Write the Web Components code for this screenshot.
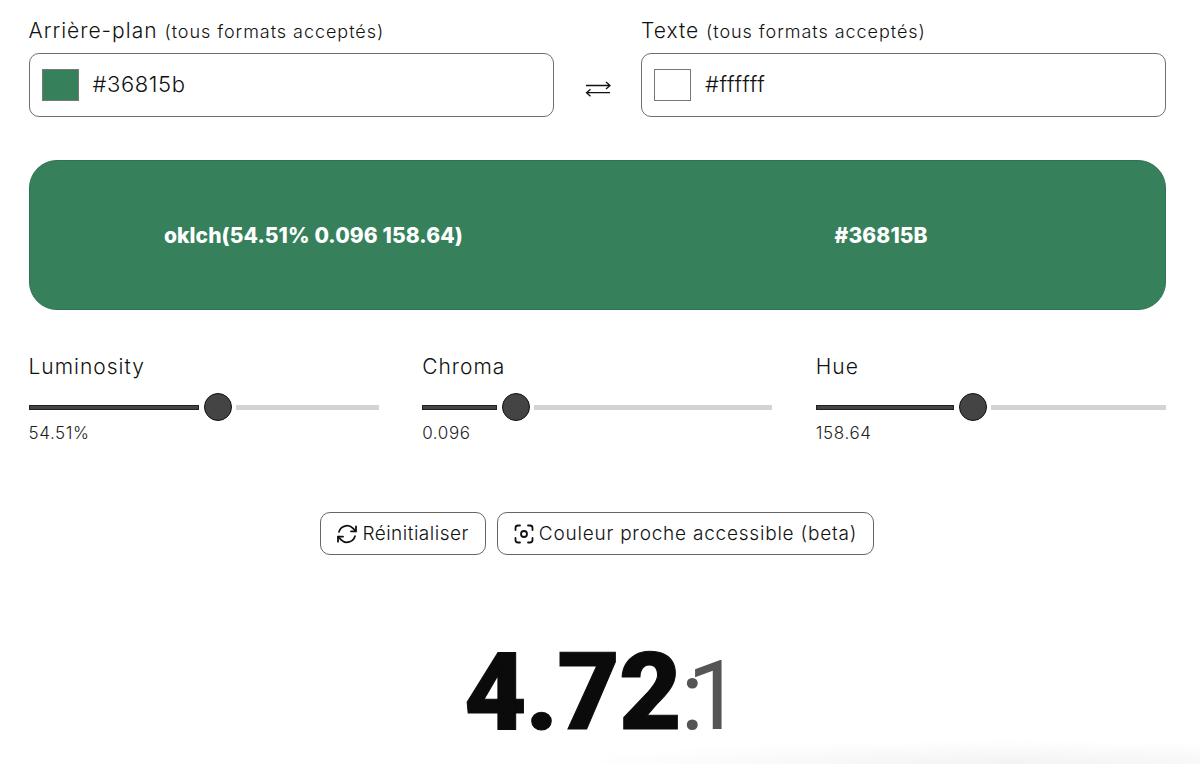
<!DOCTYPE html>
<html lang="fr">
<head>
<meta charset="utf-8">
<title>Contraste</title>
<style>
  html, body { margin: 0; background: #fff; }
  body {
    width: 1200px; height: 764px; overflow: hidden; position: relative;
    font-family: Inter, "Liberation Sans", sans-serif; font-weight: 300; color: #111;
  }
  main { display: block; padding: 17px 34px 0 28.5px; }
  .colors { display: grid; grid-template-columns: 525.5px 87px 525px; align-items: end; }
  .swap { display: flex; justify-content: center; padding-bottom: 17px; }
  .sliders { display: grid; grid-template-columns: repeat(3, 1fr); column-gap: 43.5px; margin-top: 43px; }
  .actions { display: flex; justify-content: center; gap: 11px; margin: 67px 0 0; }
  .glow {
    position: absolute; right: 0; bottom: 0; width: 640px; height: 24px;
    background: radial-gradient(ellipse at 70% 100%, #f3f3f3, #fff 70%);
  }
</style>
</head>
<body>
<main>
  <div class="colors">
    <color-field label="Arrière-plan" value="#36815b" color="#36815b"></color-field>
    <div class="swap"><swap-icon></swap-icon></div>
    <color-field label="Texte" value="#ffffff" color="#ffffff"></color-field>
  </div>
  <preview-band>
    <span>oklch(54.51% 0.096 158.64)</span>
    <span>#36815B</span>
  </preview-band>
  <div class="sliders">
    <range-row label="Luminosity" value="54.51%" fill="170"></range-row>
    <range-row label="Chroma" value="0.096" fill="75"></range-row>
    <range-row label="Hue" value="158.64" fill="138"></range-row>
  </div>
  <div class="actions">
    <action-button style="letter-spacing: 0.5px">
      <svg slot="icon" viewBox="0 0 24 24" width="24" height="24" fill="none" stroke="#111" stroke-width="1.8" stroke-linecap="round" stroke-linejoin="round">
        <path d="M16 9.35h5V4.36"/><path d="M3 19.64v-5h5"/>
        <path d="M4 9.87a8.25 8.25 0 0 1 13.8-3.7L21 9.35"/>
        <path d="M3 14.64l3.2 3.2A8.25 8.25 0 0 0 20 14.14"/>
      </svg>
      Réinitialiser
    </action-button>
    <action-button style="letter-spacing: 0.78px">
      <svg slot="icon" viewBox="0 0 24 24" width="24" height="24" fill="none" stroke="#111" stroke-width="1.8" stroke-linecap="round" stroke-linejoin="round">
        <path d="M3.5 8V6A2.5 2.5 0 0 1 6 3.5h2"/><path d="M16 3.5h2A2.5 2.5 0 0 1 20.5 6v2"/>
        <path d="M20.5 16v2a2.5 2.5 0 0 1-2.5 2.5h-2"/><path d="M8 20.5H6A2.5 2.5 0 0 1 3.5 18v-2"/>
        <circle cx="12" cy="12" r="3"/>
      </svg>
      Couleur proche accessible (beta)
    </action-button>
  </div>
  <ratio-score score="4.72" rest=":1"></ratio-score>
</main>
<div class="glow"></div>

<script>
class ColorField extends HTMLElement {
    constructor() {
        super();
        this.attachShadow({ mode: 'open' });
    }

    connectedCallback() {
        const label = this.getAttribute('label');
        const value = this.getAttribute('value');
        const color = this.getAttribute('color');
        this.shadowRoot.innerHTML = `
      <style>
        :host { display: block; }
        .label { font-size: 21px; line-height: 28px; letter-spacing: 1px; margin-bottom: 7px; color: #111; white-space: nowrap; }
        .label small { font-size: 18px; letter-spacing: 0.95px; }
        .box {
          box-sizing: border-box; height: 64px; display: flex; align-items: center; gap: 14px;
          padding: 0 12px; border: 1px solid #6f6f6f; border-radius: 10px;
        }
        .chip { width: 37px; box-sizing: border-box; height: 32px; border: 1px solid #777; background: ${color}; }
        .value { font-size: 22px; letter-spacing: 0.6px; color: #111; position: relative; top: -1px; }
      </style>
      <div class="label">${label} <small>(tous formats acceptés)</small></div>
      <div class="box"><div class="chip"></div><span class="value">${value}</span></div>
    `;
    }
}

class SwapIcon extends HTMLElement {
    constructor() {
        super();
        this.attachShadow({ mode: 'open' }).innerHTML = `
      <style>:host { display: block; width: 26px; height: 22px; }</style>
      <svg viewBox="0 0 26 22" width="26" height="22" fill="none" stroke="#111" stroke-width="1.3">
        <path d="M1 7.5H25M21 4l4 3.5-4 3.5"/>
        <path d="M25 14.7H1.5M5.5 11.2l-4 3.5 4 3.5"/>
      </svg>
    `;
    }
}

class PreviewBand extends HTMLElement {
    constructor() {
        super();
        this.attachShadow({ mode: 'open' }).innerHTML = `
      <style>
        :host {
          display: grid; grid-template-columns: 1fr 1fr; align-items: center; justify-items: center;
          box-sizing: border-box; height: 150px; margin-top: 43px; border-radius: 28px;
          border: 1px solid #2f7350; background: #36815b; color: #fff;
          font-size: 21px; font-weight: 800; letter-spacing: 0.1px;
        }
      </style>
      <slot></slot>
    `;
    }
}

class RangeRow extends HTMLElement {
    constructor() {
        super();
        this.attachShadow({ mode: 'open' });
    }

    connectedCallback() {
        const fill = this.getAttribute('fill');
        this.shadowRoot.innerHTML = `
      <style>
        :host { display: block; }
        .name { font-size: 21px; line-height: 28px; letter-spacing: 1px; color: #111; }
        .track { display: flex; align-items: center; height: 28px; gap: 5px; margin-top: 12px; }
        .fill { width: ${fill}px; height: 5px; box-sizing: border-box; background: #444; border: 1px solid #222; }
        .thumb { width: 28px; height: 28px; box-sizing: border-box; border-radius: 50%; background: #444; border: 1px solid #111; flex: none; }
        .rest { flex: 1; height: 5px; background: #d3d3d3; margin-left: -1px; }
        .val { font-size: 17px; line-height: 24px; letter-spacing: 0.6px; color: #222; }
      </style>
      <div class="name">${this.getAttribute('label')}</div>
      <div class="track"><div class="fill"></div><div class="thumb"></div><div class="rest"></div></div>
      <div class="val">${this.getAttribute('value')}</div>
    `;
    }
}

class ActionButton extends HTMLElement {
    constructor() {
        super();
        this.attachShadow({ mode: 'open' }).innerHTML = `
      <style>
        :host {
          display: inline-flex; align-items: center; gap: 3px; box-sizing: border-box; height: 43px;
          padding: 0 16px 0 14px; border: 1px solid #666; border-radius: 10px;
          font-size: 19px; color: #111; white-space: nowrap;
        }
        ::slotted(svg) { flex: none; }
      </style>
      <slot name="icon"></slot><slot></slot>
    `;
    }
}

class RatioScore extends HTMLElement {
    constructor() {
        super();
        this.attachShadow({ mode: 'open' });
    }

    connectedCallback() {
        this.shadowRoot.innerHTML = `
      <style>
        :host { display: flex; justify-content: center; margin: 82px 0 0; height: 110px; }
        .wrap { display: flex; align-items: baseline; font-family: Roboto, "Liberation Sans", sans-serif; line-height: 110px; }
        b { font-size: 108px; font-weight: 900; color: #0b0b0b; letter-spacing: -1px; -webkit-text-stroke: 1px #0b0b0b; }
        span { font-size: 97px; font-weight: 400; color: #555; letter-spacing: -17px; padding-right: 6px; }
      </style>
      <div class="wrap"><b>${this.getAttribute('score')}</b><span>${this.getAttribute('rest')}</span></div>
    `;
    }
}

customElements.define('color-field', ColorField);
customElements.define('swap-icon', SwapIcon);
customElements.define('preview-band', PreviewBand);
customElements.define('range-row', RangeRow);
customElements.define('action-button', ActionButton);
customElements.define('ratio-score', RatioScore);
</script>
</body>
</html>
